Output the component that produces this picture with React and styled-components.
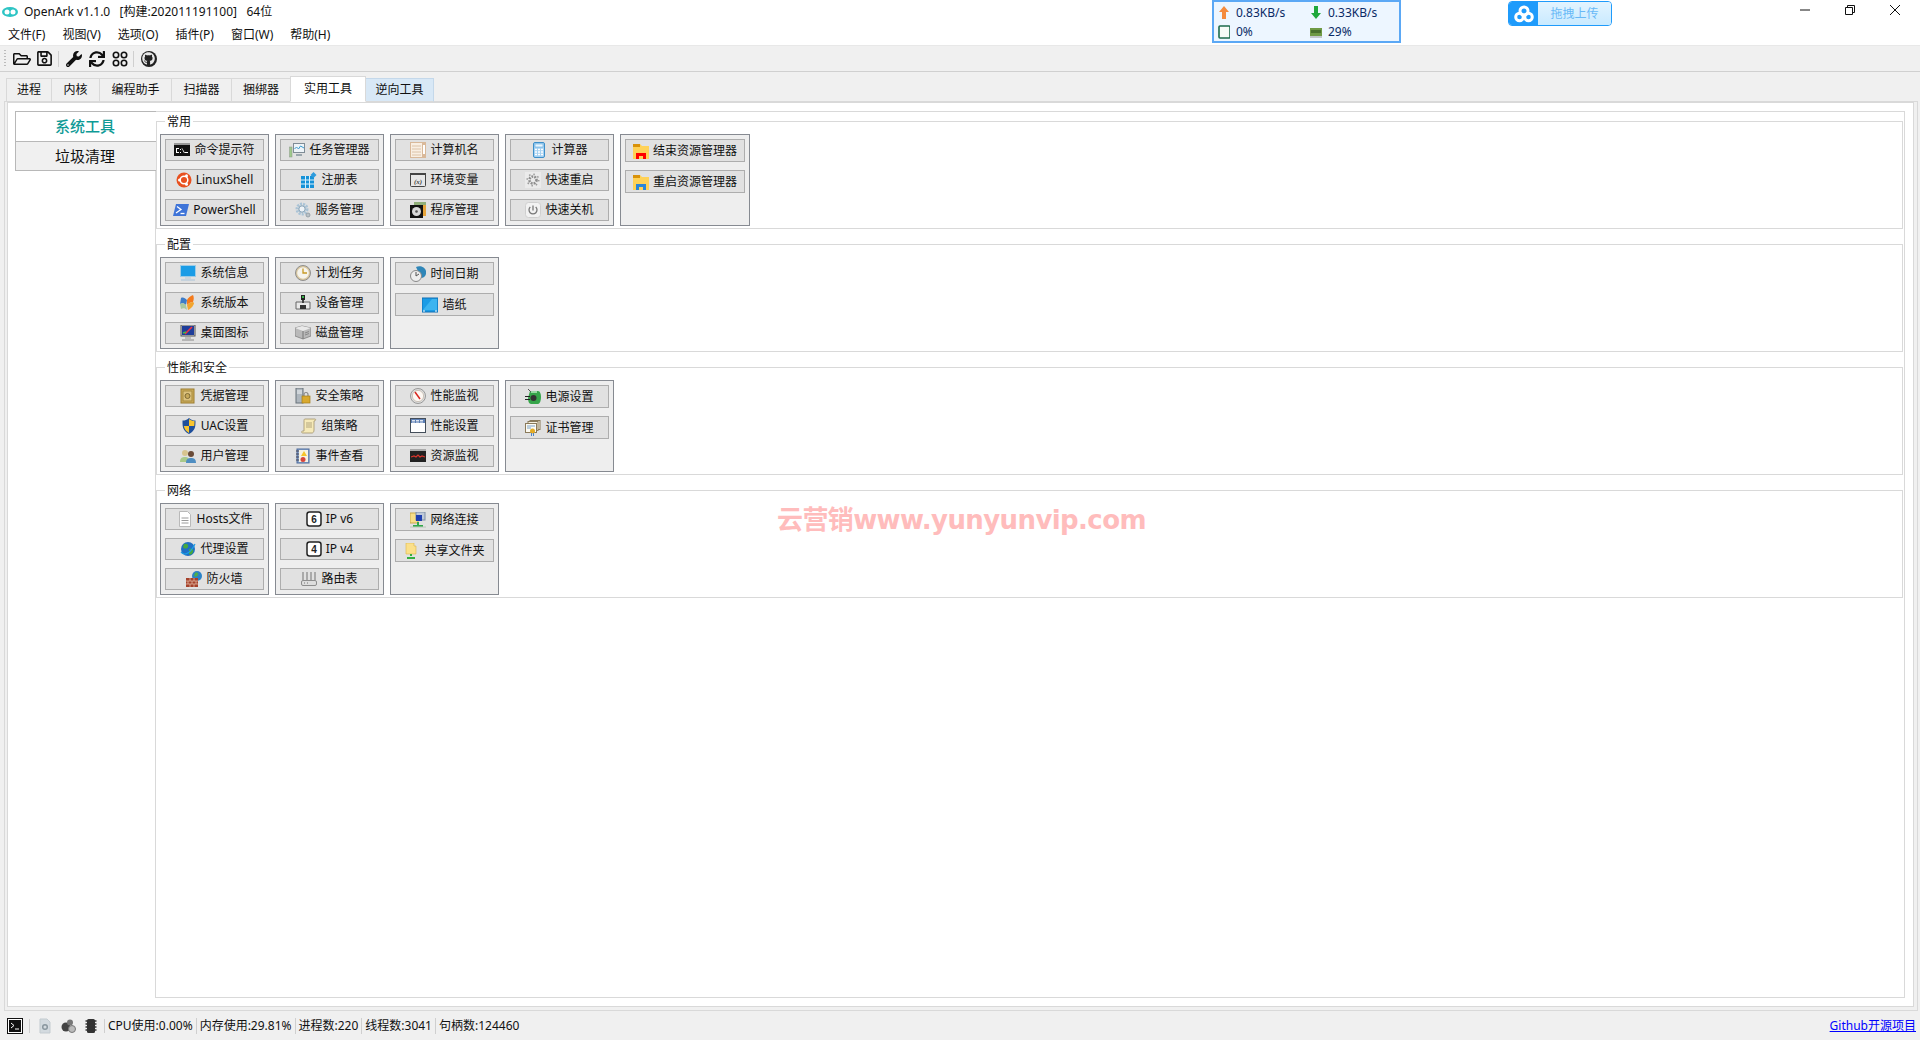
import React from 'react';
import styled, { createGlobalStyle } from 'styled-components';
import { FaRegFolderOpen, FaRegSave, FaWrench, FaSync, FaGithub } from 'react-icons/fa';

const uiFont = '"Noto Sans", "Noto Sans CJK SC", sans-serif';

const Svg = ({ children, w = 16, h = 16 }) => (
  <svg width={w} height={h} viewBox={`0 0 ${w} ${h}`}>{children}</svg>
);

// little colour icons of the tool buttons
const icons = {
  cmd: <><rect x="0" y="1" width="16" height="13" fill="#111" /><rect x="0" y="1" width="16" height="2" fill="#999" /><path d="M2 6h3v1H3v3h2v1H2zM6 7h1v1H6zM6 10h1v1H6zM8 6l3 5h-1L7.500 6zM11 10h3v1h-3z" fill="#fff" /></>,
  ubuntu: <><circle cx="8" cy="8" r="7.500" fill="#e8501f" /><circle cx="8" cy="8" r="3.800" fill="none" stroke="#fff" strokeWidth="1.500" /><circle cx="3.500" cy="8" r="1.500" fill="#fff" /><circle cx="10.500" cy="3.800" r="1.500" fill="#fff" /><circle cx="10.500" cy="12.200" r="1.500" fill="#fff" /></>,
  ps: <><path d="M3 2h13l-3 12H0z" fill="#3f74d8" /><path d="M4 4.500l4 3-5 3.500" fill="none" stroke="#fff" strokeWidth="1.300" /><path d="M7.500 11.500h4" stroke="#fff" strokeWidth="1.300" /></>,
  task: <><rect x="4.500" y="1.500" width="11" height="9" fill="#eef4f8" stroke="#7f8c96" /><path d="M5.500 7l2-2 2 2 2-3 3.500 2" fill="none" stroke="#3a9bd0" /><path d="M7 13h6" stroke="#9aa6ad" strokeWidth="2" /><rect x="0.500" y="5" width="2.500" height="10" fill="#9fc98a" stroke="#8a9a8a" strokeWidth=".5" /></>,
  reg: <><rect x="0" y="4" width="13" height="12" fill="#1692d8" /><path d="M4.500 4v12M8.500 4v12M0 8h13M0 12h13" stroke="#d9f0fb" /><path d="M12.500 0l3 3-3 3-3-3z" fill="#2e9bdc" /></>,
  gear: <><circle cx="7" cy="7" r="5" fill="none" stroke="#a9c3d6" strokeWidth="3" strokeDasharray="2 1" /><circle cx="7" cy="7" r="3.200" fill="#eef3f7" stroke="#7f9db3" /><circle cx="13" cy="13" r="2" fill="#b9c2c8" stroke="#8d979d" strokeWidth=".8" /></>,
  name: <><rect x="0" y="0" width="16" height="16" fill="#d9b99a" /><rect x="1" y="1" width="11" height="14" fill="#f9efe3" /><path d="M2 4h9M2 7h9M2 10h9M2 13h9" stroke="#dcc3a8" /><rect x="13" y="3" width="2" height="9" fill="#fff" /></>,
  env: <><rect x=".500" y="1.500" width="15" height="13" rx="1" fill="#e7e7e7" stroke="#444" /><rect x="0" y="1" width="16" height="2" fill="#444" /><text x="8" y="11.500" fontSize="7" fontStyle="italic" fontWeight="700" textAnchor="middle" fill="#444" fontFamily="Liberation Serif, serif">(x)</text></>,
  program: <><rect x="4" y="0" width="12" height="14" fill="#8fae78" /><rect x="13" y="3" width="3" height="11" fill="#e7a53c" /><rect x="0" y="3" width="13" height="13" fill="#111" /><circle cx="6.500" cy="9.500" r="4.500" fill="#d8d8d8" /><circle cx="6.500" cy="9.500" r="1.300" fill="#555" /></>,
  calc: <><rect x="2.500" y=".500" width="11" height="15" rx="1.500" fill="#a5d1f2" stroke="#3d8fc9" /><rect x="4" y="2" width="8" height="3" fill="#e9f6ff" stroke="#4e9fd6" strokeWidth=".5" /><path d="M4 7.500h2M7 7.500h2M10 7.500h2M4 10h2M7 10h2M10 10h2M4 12.500h2M7 12.500h2M10 12.500h2" stroke="#fff" strokeWidth="1.300" /></>,
  restart: <><rect width="16" height="16" fill="#ebebeb" /><circle cx="8" cy="8" r="3.500" fill="none" stroke="#8d8d8d" strokeWidth="2.600" strokeDasharray="1.800 1.100" /><circle cx="8" cy="8" r="5.800" fill="none" stroke="#9a9a9a" strokeWidth="1.500" strokeDasharray="1.500 3" /></>,
  shutdown: <><rect x=".500" y=".500" width="15" height="15" rx="3" fill="#f2f2f2" stroke="#cfcfcf" /><path d="M5.300 5a4 4 0 1 0 5.400 0" fill="none" stroke="#777" strokeWidth="1.300" /><path d="M8 3.500v5" stroke="#777" strokeWidth="1.300" /></>,
  folderRed: <><path d="M0 1h7l2 2h7v13H0z" fill="#ffd257" /><rect x="0" y="1" width="7" height="3" fill="#d9920a" /><path d="M3 16v-6h10v6h-3v-3H6v3z" fill="#f00" /></>,
  folderBlue: <><path d="M0 1h7l2 2h7v13H0z" fill="#ffd257" /><rect x="0" y="1" width="7" height="3" fill="#d9920a" /><path d="M3 16v-6h10v6h-3v-3H6v3z" fill="#2a86d8" /></>,
  monitor: <><rect x="0" y="0" width="16" height="12" fill="#1a9ce6" /><rect x=".500" y=".500" width="15" height="11" fill="none" stroke="#9ccbe6" /><path d="M5 13h6" stroke="#b8cbd8" /><path d="M1 15h14" stroke="#a9c4da" /></>,
  winver: <><path d="M1 3c2-1 4 0 6 2l-1 5C4 8 2 8 0 9z" fill="#3d7cc8" /><path d="M7 5c1-2 3-4 6-5 1 2 1 4 0 7-2 0-4 1-6 3z" fill="#f47a1c" /><path d="M0 9c2-1 4-1 6 1l1 5C5 13 3 13 1 14z" fill="#a8c8a0" /><path d="M7 10c2-2 4-3 6-3l1 1c0 2-3 6-6 7z" fill="#f2a52e" /></>,
  desktop: <><rect x="1" y="0" width="14" height="11" fill="#d6d6d6" stroke="#555" /><rect x="2" y="1" width="12" height="9" fill="#1e3d9a" /><path d="M5 9l7-7" stroke="#e34" strokeWidth="1.600" /><path d="M3 8l3-1" stroke="#4b4" strokeWidth="1.500" /><path d="M5 12h6v2H5z" fill="#bbb" /><path d="M2 15h12" stroke="#888" /></>,
  clock: <><circle cx="8" cy="8" r="7.500" fill="#d9c79f" stroke="#8e8e8e" /><circle cx="8" cy="8" r="5.800" fill="#f6f4ec" /><path d="M8 3.500V8h4" fill="none" stroke="#c79a25" strokeWidth="1.300" /></>,
  device: <><rect x="6" y="0" width="4" height="5" fill="#222" /><rect x="7" y="1" width="2" height="2" fill="#3ab54a" /><path d="M1 7h14v7H1z" fill="#e9e9e9" stroke="#666" /><rect x="5" y="10" width="6" height="4" fill="#333" /><rect x="7" y="5" width="2" height="3" fill="#444" /></>,
  disk: <><path d="M0 3l7-2 9 2v8l-8 3-8-3z" fill="#b9b9b9" stroke="#777" strokeWidth=".7" /><path d="M0 3l8 3 8-3-9-2z" fill="#e9e9e9" /><path d="M8 6v8" stroke="#777" /><path d="M10 8l4-1.500M10 10l4-1.500" stroke="#888" /></>,
  datetime: <><path d="M6 1c4-2 9 0 10 4s-2 7-5 7z" fill="#2f86b8" /><circle cx="6" cy="10" r="5.500" fill="#eee" stroke="#888" /><path d="M6 10l3-2M6 10V6" stroke="#555" /></>,
  safe: <><rect x="1" y="1" width="13" height="14" fill="#cfae5d" stroke="#9b7c2e" /><rect x="3" y="3" width="9" height="10" fill="#dcc27e" stroke="#a68a3e" /><circle cx="7.500" cy="8" r="2.500" fill="#c7a95a" stroke="#7e6a35" /></>,
  serverLock: <><rect x="1" y="0" width="7" height="15" fill="#aeb6bd" stroke="#69737b" /><path d="M2 3h5M2 5h5" stroke="#f1f4f6" /><path d="M9 8V6.500a2 2 0 0 1 4 0V8" fill="none" stroke="#888" strokeWidth="1.200" /><rect x="7" y="8" width="8" height="7" fill="#d9a92f" stroke="#a37d17" strokeWidth=".7" /></>,
  gauge: <><circle cx="8" cy="8" r="7.500" fill="#ddd" stroke="#999" /><circle cx="8" cy="8" r="5.600" fill="#fdf8f3" stroke="#b5a99a" strokeWidth=".6" /><path d="M5 4l5 7" stroke="#d8261f" strokeWidth="1.500" /></>,
  window: <><rect x=".500" y=".500" width="15" height="14" fill="#fff" stroke="#444e5a" /><rect x="1" y="1" width="14" height="4" fill="#5c7fb5" /><path d="M2 2.500h3M6 2.500h3M10 2.500h3M2 4h3M6 4h3M10 4h3" stroke="#fff" strokeWidth=".8" /></>,
  resmon: <><rect x="0" y="1" width="16" height="13" fill="#222" /><rect x="0" y="1" width="16" height="2" fill="#aaa" /><path d="M1 9l3-1 2 1 2-2 2 2 2-1 3 1" fill="none" stroke="#d8352c" strokeWidth="1.200" /></>,
  shield: <><path d="M8 0c2 2 4 2.500 6.500 2.500 0 6 0 10-6.500 13.500C1.500 12.500 1.500 8.500 1.500 2.500 4 2.500 6 2 8 0z" fill="#1e4f9c" /><path d="M8 1c2 1.500 3.500 2 5.500 2 0 2 0 3.500-.3 5H8z" fill="#f8c42e" /><path d="M8 8H2.800c.6 3 2 5 5.200 7z" fill="#f8c42e" /></>,
  scroll: <><path d="M4 1h10c1 0 1 2-1 2v9c0 2-1 3-2 3H2c-2 0-2-2 0-2h1V3c0-1 0-2 1-2z" fill="#f6eab9" stroke="#a2936b" strokeWidth=".8" /><path d="M5 5h6M5 7h6M5 9h6" stroke="#b3a67e" /></>,
  events: <><rect x="2" y="1" width="12" height="14" fill="#8fa7cc" stroke="#4b6a9c" /><rect x="4" y="2" width="9" height="12" fill="#f6f2e2" /><path d="M1 3h3M1 6h3M1 9h3M1 12h3" stroke="#445" /><path d="M9 3l3 5H6z" fill="#f6c42c" /><circle cx="8" cy="11.500" r="2.500" fill="#d8453c" /></>,
  users: <><circle cx="5" cy="5" r="3" fill="#d8c48f" /><path d="M0 14c0-4 2-5 5-5s4 1 4 5z" fill="#a9c98a" /><circle cx="11" cy="6" r="3" fill="#6a4b38" /><path d="M6 15c0-4 2-5 5-5s5 1 5 5z" fill="#4f8ec2" /></>,
  power: <><path d="M5 2h8c2 0 3 3 3 6s-1 7-3 7H6c-2 0-3-3-3-6z" fill="#36a54a" /><path d="M6 3h6" stroke="#bdeac4" strokeWidth="1.500" /><circle cx="8.500" cy="9" r="3" fill="#333" /><path d="M0 7.500h5M0 10.500h5" stroke="#222" strokeWidth="1.200" /><path d="M3 0l3 3" stroke="#555" /></>,
  cert: <><rect x="5" y="0.500" width="10" height="9" fill="#f5efdd" stroke="#8a7a5a" /><rect x="3" y="1.500" width="10" height="9" fill="#f5efdd" stroke="#8a7a5a" /><rect x=".500" y="3.500" width="11" height="9" fill="#fdfaf0" stroke="#8a7a5a" /><path d="M2 6h8M2 8h4" stroke="#7aa2c8" /><circle cx="7.500" cy="11" r="2.500" fill="#e3ab24" /><path d="M6.500 13v3M8.500 13v3" stroke="#4a82c8" /></>,
  hosts: <><path d="M2.500.500h8l3 3v12h-11z" fill="#fff" stroke="#b9b9b9" /><path d="M4.500 7h7M4.500 9.500h7M4.500 12h7" stroke="#9a9a9a" /></>,
  key6: <><rect x="1" y="1" width="14" height="14" rx="2.500" fill="#fff" stroke="#222" strokeWidth="1.500" /><text x="8" y="12" fontSize="10" fontWeight="700" textAnchor="middle" fill="#222" fontFamily="Liberation Sans, sans-serif">6</text></>,
  key4: <><rect x="1" y="1" width="14" height="14" rx="2.500" fill="#fff" stroke="#222" strokeWidth="1.500" /><text x="8" y="12" fontSize="10" fontWeight="700" textAnchor="middle" fill="#222" fontFamily="Liberation Sans, sans-serif">4</text></>,
  router: <><path d="M2 1v8M6 1v8M10 1v8M14 1v8" stroke="#8d8d8d" strokeWidth="1.300" /><rect x=".500" y="9.500" width="15" height="5" rx="1.500" fill="#ddd" stroke="#8d8d8d" /><path d="M3 12h1M6 12h1" stroke="#777" /></>,
  globe: <><circle cx="8" cy="8" r="7" fill="#1f6fc4" /><path d="M4 3c3-1 5 1 4 3S4 8 3 6zM9 8c3-1 5 0 4 3s-3 3-4 2z" fill="#46a83f" /><path d="M1 11C3 14 9 15 15 3" fill="none" stroke="#19a0e8" strokeWidth="1.200" /></>,
  firewall: <><circle cx="11" cy="5" r="5" fill="#2b83c8" /><path d="M9 2c2-1 4 0 3 2s-3 2-4 1z" fill="#4cae4c" /><rect x="0" y="7" width="12" height="9" fill="#a5422c" /><path d="M0 10h12M0 13h12M4 7v3M8 7v3M2 10v3M6 10v3M10 10v3M4 13v3M8 13v3" stroke="#e8c2ad" strokeWidth=".7" /></>,
  network: <><rect x="0" y="1" width="8" height="10" fill="#f8de87" stroke="#c9a94c" /><rect x="6" y="0" width="9" height="8" fill="#bfc9d8" stroke="#7f8fa5" /><rect x="6" y="3" width="6" height="6" fill="#1f3fb0" /><path d="M8 10v3" stroke="#30a84a" strokeWidth="2" /><path d="M3 13h10v2H3z" fill="#30a84a" /><path d="M0 15h16" stroke="#b8c8b8" /></>,
  share: <><path d="M2 0h8v3h2v8H2z" fill="#fbe08a" stroke="#dcb548" strokeWidth=".6" /><path d="M7 11v2" stroke="#35b040" strokeWidth="2" /><path d="M3 14h8v2H3z" fill="#35b040" /></>,
  // status bar
  terminal: <><rect x=".500" y=".500" width="15" height="15" fill="#fff" stroke="#111" /><rect x="2" y="2" width="12" height="12" fill="#111" /><path d="M4 5l3 2.500L4 10" fill="none" stroke="#fff" /><path d="M8 11h4" stroke="#fff" /></>,
  docGear: <><path d="M3 1h7l3 3v11H3z" fill="#d3dadf" stroke="#c3cbd0" /><circle cx="8" cy="9" r="2.300" fill="none" stroke="#8a979f" strokeWidth="1.500" /></>,
  gears: <><circle cx="6" cy="9" r="4.500" fill="#444" /><circle cx="10" cy="4.500" r="3" fill="#777" /><circle cx="12" cy="11" r="3.500" fill="#bbb" stroke="#777" /></>,
  chip: <><rect x="4" y="1" width="8" height="14" rx="1.500" fill="#333" /><path d="M2.500 3h11M2.500 6h11M2.500 9h11M2.500 12h11" stroke="#333" strokeWidth="1.300" /></>,
  // net box
  arrowUp: <path d="M6 1l5 6H8v7H4V7H1z" fill="#f48b3e" />,
  arrowDown: <path d="M4 1h4v7h3l-5 6-5-6h3z" fill="#1fa83c" />,
  cpu: <><rect x="1" y="1" width="11" height="12" rx="1" fill="#f6fbf7" stroke="#1d6b4c" strokeWidth="1.600" /></>,
  ram: <><rect x="0" y="3" width="12" height="8" fill="#6f9a45" /><path d="M2 5v3M4 5v3M6 5v3M8 5v3M10 5v3" stroke="#254716" /><path d="M0 12h12" stroke="#999" /></>,
  wallpaper: <><rect x="0" y="1" width="16" height="14" fill="#1a9ce6" stroke="#0f6fb4" /><path d="M1 13L10 2h5v11z" fill="#3bb4f0" /><path d="M1 14h2M13 14h2" stroke="#fff" /></>,
};

const groups = [
  {
    title: '常用',
    panels: [
      [['cmd', '命令提示符'], ['ubuntu', 'LinuxShell'], ['ps', 'PowerShell']],
      [['task', '任务管理器'], ['reg', '注册表'], ['gear', '服务管理']],
      [['name', '计算机名'], ['env', '环境变量'], ['program', '程序管理']],
      [['calc', '计算器'], ['restart', '快速重启'], ['shutdown', '快速关机']],
      [['folderRed', '结束资源管理器'], ['folderBlue', '重启资源管理器']],
    ],
  },
  {
    title: '配置',
    panels: [
      [['monitor', '系统信息'], ['winver', '系统版本'], ['desktop', '桌面图标']],
      [['clock', '计划任务'], ['device', '设备管理'], ['disk', '磁盘管理']],
      [['datetime', '时间日期'], ['wallpaper', '墙纸']],
    ],
  },
  {
    title: '性能和安全',
    panels: [
      [['safe', '凭据管理'], ['shield', 'UAC设置'], ['users', '用户管理']],
      [['serverLock', '安全策略'], ['scroll', '组策略'], ['events', '事件查看']],
      [['gauge', '性能监视'], ['window', '性能设置'], ['resmon', '资源监视']],
      [['power', '电源设置'], ['cert', '证书管理']],
    ],
  },
  {
    title: '网络',
    panels: [
      [['hosts', 'Hosts文件'], ['globe', '代理设置'], ['firewall', '防火墙']],
      [['key6', 'IP v6'], ['key4', 'IP v4'], ['router', '路由表']],
      [['network', '网络连接'], ['share', '共享文件夹']],
    ],
  },
];

const menus = ['文件(F)', '视图(V)', '选项(O)', '插件(P)', '窗口(W)', '帮助(H)'];
const tabs = ['进程', '内核', '编程助手', '扫描器', '捆绑器', '实用工具', '逆向工具'];
const tabWidths = [46, 49, 73, 61, 60, 76, 69];
const stats = ['CPU使用:0.00%', '内存使用:29.81%', '进程数:220', '线程数:3041', '句柄数:124460'];

const App = () => (
  <>
    <Global />
    <Window>
      <Header>
        <HeaderLeft>
          <TitleRow>
            <svg width="16" height="12" viewBox="0 0 16 12">
              <ellipse cx="8" cy="6" rx="8" ry="5" fill="#2cc4c4" />
              <circle cx="5" cy="6" r="2.500" fill="#fff" />
              <circle cx="11" cy="6" r="2.500" fill="#fff" />
            </svg>
            <TitleText>OpenArk v1.1.0&nbsp;&nbsp;&nbsp;[构建:202011191100]&nbsp;&nbsp;&nbsp;64位</TitleText>
          </TitleRow>
          <MenuRow>
            {menus.map(m => <MenuItem key={m}>{m}</MenuItem>)}
          </MenuRow>
        </HeaderLeft>
        <NetBox>
          <NetCell><Svg w={12} h={15}>{icons.arrowUp}</Svg>0.83KB/s</NetCell>
          <NetCell><Svg w={12} h={15}>{icons.arrowDown}</Svg>0.33KB/s</NetCell>
          <NetCell><Svg w={12} h={14}>{icons.cpu}</Svg>0%</NetCell>
          <NetCell><Svg w={12} h={14}>{icons.ram}</Svg>29%</NetCell>
        </NetBox>
        <Upload>
          <UploadIcon>
            <svg width="20" height="18" viewBox="0 0 20 18">
              <g fill="none" stroke="#fff" strokeWidth="3">
                <circle cx="10" cy="6" r="4" />
                <circle cx="5.500" cy="12" r="3.800" />
                <circle cx="14.500" cy="12" r="3.800" />
              </g>
            </svg>
          </UploadIcon>
          <UploadText>拖拽上传</UploadText>
        </Upload>
        <WinControls>
          <WinButton>
            <svg width="10" height="10" viewBox="0 0 10 10"><path d="M0 5h10" stroke="#111" /></svg>
          </WinButton>
          <WinButton>
            <svg width="10" height="10" viewBox="0 0 10 10"><path d="M.5 2.500h7v7h-7zM2.500 2.500v-2h7v7h-2" fill="none" stroke="#111" /></svg>
          </WinButton>
          <WinButton>
            <svg width="10" height="10" viewBox="0 0 10 10"><path d="M0 0l10 10M10 0L0 10" stroke="#111" /></svg>
          </WinButton>
        </WinControls>
      </Header>

      <Toolbar>
        <Grip />
        <ToolIcon><FaRegFolderOpen size={18} /></ToolIcon>
        <ToolIcon><FaRegSave size={17} /></ToolIcon>
        <ToolSep />
        <ToolIcon><FaWrench size={16} /></ToolIcon>
        <ToolIcon><FaSync size={16} /></ToolIcon>
        <ToolIcon>
          <svg width="16" height="16" viewBox="0 0 16 16">
            <g fill="none" stroke="#111" strokeWidth="1.600">
              <circle cx="4" cy="4" r="2.700" />
              <circle cx="12" cy="4" r="2.700" />
              <circle cx="4" cy="12" r="2.700" />
              <circle cx="12" cy="12" r="2.700" />
            </g>
          </svg>
        </ToolIcon>
        <ToolSep />
        <ToolIcon>
          <GithubRing><FaGithub size={13} color="#e8e8e8" /></GithubRing>
        </ToolIcon>
      </Toolbar>

      <TabBar>
        {tabs.map((t, i) => (
          <Tab key={t} $w={tabWidths[i]} $active={t === '实用工具'} $hover={t === '逆向工具'}>{t}</Tab>
        ))}
      </TabBar>

      <OuterPane>
        <InnerPane>
          <SideTabs>
            <SideTab $active>系统工具</SideTab>
            <SideTab>垃圾清理</SideTab>
          </SideTabs>
          <Page>
            {groups.map(g => (
              <Group key={g.title}>
                <GroupTitle>{g.title}</GroupTitle>
                {g.panels.map(panel => (
                  <Panel key={panel[0][1]} $wide={panel[0][0] === 'folderRed'}>
                    {panel.map(([icon, label]) => (
                      <ToolButton key={label} $tall={panel.length === 2}>
                        <Svg>{icons[icon]}</Svg>
                        {label}
                      </ToolButton>
                    ))}
                  </Panel>
                ))}
              </Group>
            ))}
          </Page>
        </InnerPane>
        <Watermark>云营销www.yunyunvip.com</Watermark>
      </OuterPane>

      <StatusBar>
        <StatusIcon><Svg>{icons.terminal}</Svg></StatusIcon>
        <StatusSep $left={6} />
        <StatusIcon><Svg>{icons.docGear}</Svg></StatusIcon>
        <StatusIcon><Svg>{icons.gears}</Svg></StatusIcon>
        <StatusIcon><Svg>{icons.chip}</Svg></StatusIcon>
        <StatusSep $left={2} />
        {stats.map(s => <Stat key={s}>{s}</Stat>)}
        <GitLink>Github开源项目</GitLink>
      </StatusBar>
    </Window>
  </>
);

// Styles

const Global = createGlobalStyle`
  html, body {
    margin: 0;
    padding: 0;
    background: #f0f0f0;
  }
  * {
    box-sizing: border-box;
  }
`;

const Window = styled.div`
  width: 1920px;
  height: 1040px;
  display: flex;
  flex-direction: column;
  position: relative;
  overflow: hidden;
  background: #f0f0f0;
  color: #111;
  font: 12px/16px ${uiFont};
`;

const Header = styled.div`
  height: 46px;
  flex: none;
  display: flex;
  background: #fff;
  border-bottom: 1px solid #e8e8e8;
`;

const HeaderLeft = styled.div`
  width: 1212px;
  flex: none;
`;

const TitleRow = styled.div`
  height: 23px;
  display: flex;
  align-items: center;
  gap: 6px;
  padding-left: 2px;
`;

const TitleText = styled.span`
  font-size: 12px;
`;

const MenuRow = styled.div`
  height: 22px;
  margin-top: 1px;
  display: flex;
  align-items: center;
  padding-left: 8px;
  gap: 17px;
`;

const MenuItem = styled.span`
  white-space: nowrap;
`;

const NetBox = styled.div`
  width: 189px;
  height: 43px;
  flex: none;
  display: grid;
  grid-template-columns: 92px 1fr;
  grid-auto-rows: 19px;
  align-content: start;
  align-items: center;
  padding: 1px 0 2px 4px;
  background: #edf6ff;
  border: 2px solid #5ba8f5;
  color: #0a2a66;
`;

const NetCell = styled.div`
  display: flex;
  align-items: center;
  gap: 6px;
`;

const Upload = styled.div`
  width: 104px;
  height: 25px;
  flex: none;
  margin: 1px 0 0 107px;
  display: flex;
  border: 1px solid #1f9bfb;
  border-radius: 4px;
  overflow: hidden;
`;

const UploadIcon = styled.div`
  width: 29px;
  display: flex;
  align-items: center;
  justify-content: center;
  background: #1f9bfb;
`;

const UploadText = styled.div`
  flex: 1;
  display: flex;
  align-items: center;
  justify-content: center;
  color: #68b9f7;
  background: linear-gradient(#e3f4ff, #c9eaff);
`;

const WinControls = styled.div`
  margin-left: auto;
  padding-right: 3px;
  display: flex;
`;

const WinButton = styled.div`
  width: 45px;
  height: 20px;
  display: flex;
  align-items: center;
  justify-content: center;
`;

const Toolbar = styled.div`
  height: 26px;
  flex: none;
  display: flex;
  align-items: center;
  padding-left: 4px;
  border-bottom: 1px solid #d0d0d0;
`;

const Grip = styled.div`
  width: 2px;
  height: 18px;
  margin-right: 4px;
  background: repeating-linear-gradient(#bbb 0 1px, transparent 1px 3px);
`;

const ToolIcon = styled.div`
  width: 23px;
  height: 22px;
  display: flex;
  align-items: center;
  justify-content: center;
  color: #111;
`;

const ToolSep = styled.div`
  width: 1px;
  height: 16px;
  margin: 0 3px 0 2px;
  background: #cfcfcf;
`;

const GithubRing = styled.div`
  width: 16px;
  height: 16px;
  display: flex;
  align-items: center;
  justify-content: center;
  border-radius: 50%;
  background: #222;
`;

const TabBar = styled.div`
  height: 29px;
  flex: none;
  display: flex;
  align-items: flex-end;
  padding-left: 6px;
`;

const Tab = styled.div`
  width: ${p => p.$w}px;
  height: ${p => (p.$active ? 26 : 24)}px;
  display: flex;
  align-items: center;
  justify-content: center;
  margin-bottom: -1px;
  margin-right: -1px;
  position: relative;
  z-index: ${p => (p.$active ? 1 : 0)};
  background: ${p => (p.$active ? '#fff' : p.$hover ? '#d8e8f6' : '#f0f0f0')};
  border: 1px solid ${p => (p.$hover ? '#c4d8ea' : '#d9d9d9')};
  border-bottom-color: ${p => (p.$active ? '#fff' : '#d9d9d9')};
`;

const OuterPane = styled.div`
  flex: 1;
  min-height: 0;
  margin: 0 2px 0 4px;
  padding: 0 3px 3px 2px;
  border: 1px solid #d9d9d9;
`;

const InnerPane = styled.div`
  height: 100%;
  display: flex;
  padding: 8px 8px 8px 7px;
  background: #fff;
  border: 1px solid #d9d9d9;
`;

const SideTabs = styled.div`
  width: 140px;
  flex: none;
  display: flex;
  flex-direction: column;
`;

const SideTab = styled.div`
  height: ${p => (p.$active ? 31 : 30)}px;
  flex: none;
  display: flex;
  align-items: center;
  justify-content: center;
  padding: 0 2px 1px 0;
  font-size: 15px;
  margin-bottom: -1px;
  margin-right: -1px;
  position: relative;
  z-index: 1;
  color: ${p => (p.$active ? '#0f9a96' : '#111')};
  font-weight: ${p => (p.$active ? 500 : 400)};
  background: ${p => (p.$active ? '#fff' : '#f0f0f0')};
  border: 1px solid #b8b8b8;
  border-right-width: 0;
`;

const Page = styled.div`
  flex: 1;
  display: flex;
  flex-direction: column;
  gap: 15px;
  padding: 9px 1px 0 0;
  border: 1px solid #d9d9d9;
`;

const Group = styled.div`
  height: 108px;
  flex: none;
  display: flex;
  align-items: flex-start;
  gap: 6px;
  padding: 12px 0 0 3px;
  position: relative;
  border: 1px solid #d9d9d9;
`;

const GroupTitle = styled.span`
  position: absolute;
  left: 8px;
  top: -8px;
  padding: 0 2px;
  background: #fff;
`;

const Panel = styled.div`
  width: ${p => (p.$wide ? 130 : 109)}px;
  height: 92px;
  display: flex;
  flex-direction: column;
  gap: 8px;
  padding: 4px;
  background: #eee;
  border: 1px solid #868a91;
`;

const ToolButton = styled.div`
  height: ${p => (p.$tall ? 23 : 22)}px;
  flex: none;
  display: flex;
  align-items: center;
  justify-content: center;
  gap: 4px;
  white-space: nowrap;
  background: #e1e1e1;
  border: 1px solid #adadad;
`;

const Watermark = styled.div`
  position: absolute;
  left: 777px;
  top: 505px;
  color: #ffbcbc;
  font: 700 26px/30px "DejaVu Sans", "Noto Sans CJK SC", sans-serif;
  letter-spacing: -0.6px;
  white-space: nowrap;
`;

const StatusBar = styled.div`
  height: 29px;
  flex: none;
  display: flex;
  align-items: center;
  padding: 0 4px 0 7px;
`;

const StatusIcon = styled.div`
  width: 23px;
  height: 16px;
  display: flex;
  align-items: center;
  justify-content: center;

  &:first-child {
    width: 16px;
  }
`;

const StatusSep = styled.div`
  width: 1px;
  height: 14px;
  margin: 0 3px 0 ${p => p.$left}px;
  background: #cfcfcf;
`;

const Stat = styled.span`
  white-space: nowrap;
  padding-right: 3px;
  margin-right: 3px;
  border-right: 1px solid #cfcfcf;

  &:last-of-type {
    border-right: 0;
  }
`;

const GitLink = styled.a`
  margin-left: auto;
  color: #0000ff;
  text-decoration: underline;
`;

export default App;
